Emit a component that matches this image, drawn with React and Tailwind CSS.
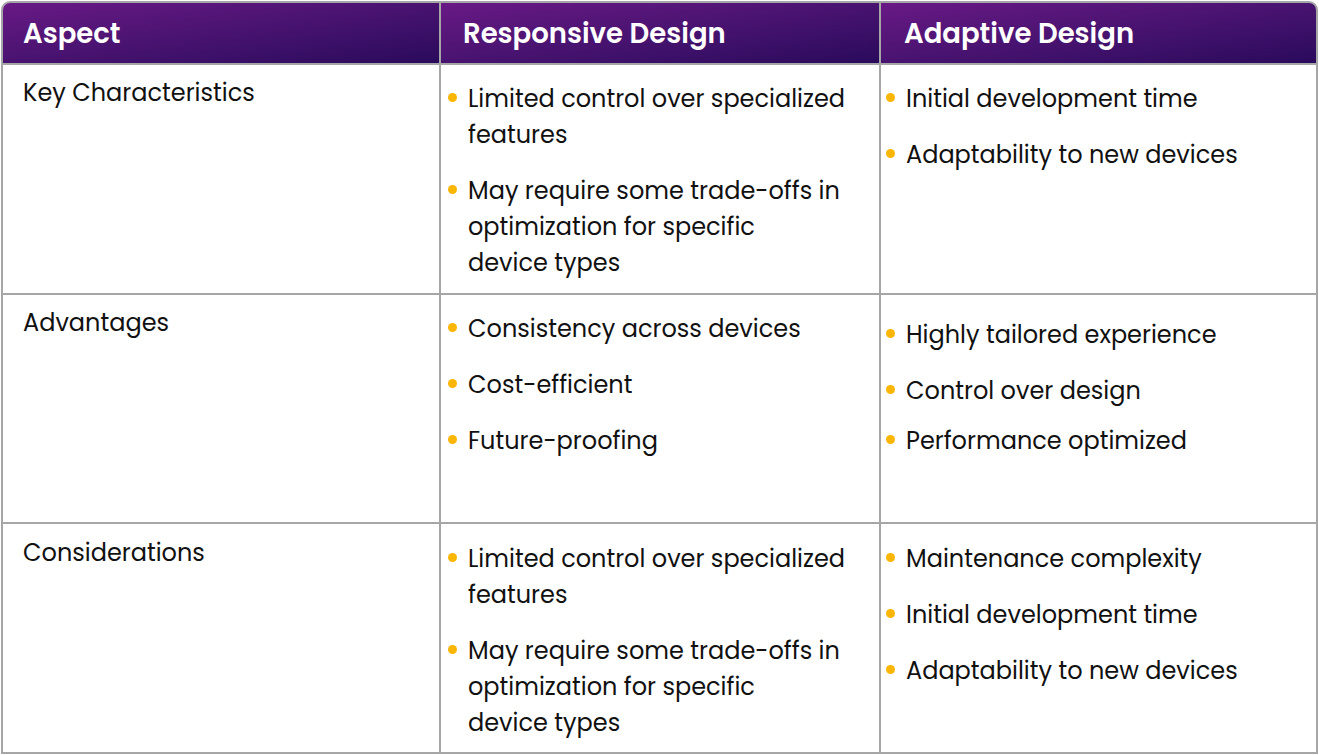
const rows = [
  {
    aspect: 'Key Characteristics',
    aspectPad: 'pt-[10px]',
    responsive: [
      ['Limited control over specialized', 'features'],
      ['May require some trade-offs in', 'optimization for specific', 'device types'],
    ],
    responsivePad: 'pt-[16px]',
    responsiveGaps: ['mt-[20px]'],
    adaptive: [['Initial development time'], ['Adaptability to new devices']],
    adaptivePad: 'pt-[16px]',
    adaptiveGaps: ['mt-[20px]'],
  },
  {
    aspect: 'Advantages',
    aspectPad: 'pt-[10px]',
    responsive: [['Consistency across devices'], ['Cost-efficient'], ['Future-proofing']],
    responsivePad: 'pt-[16px]',
    responsiveGaps: ['mt-[20px]', 'mt-[20px]'],
    adaptive: [['Highly tailored experience'], ['Control over design'], ['Performance optimized']],
    adaptivePad: 'pt-[22px]',
    adaptiveGaps: ['mt-[20px]', 'mt-[14px]'],
  },
  {
    aspect: 'Considerations',
    aspectPad: 'pt-[11px]',
    responsive: [
      ['Limited control over specialized', 'features'],
      ['May require some trade-offs in', 'optimization for specific', 'device types'],
    ],
    responsivePad: 'pt-[17px]',
    responsiveGaps: ['mt-[20px]'],
    adaptive: [['Maintenance complexity'], ['Initial development time'], ['Adaptability to new devices']],
    adaptivePad: 'pt-[17px]',
    adaptiveGaps: ['mt-[20px]', 'mt-[20px]'],
  },
];

function BulletList({ items, gaps, pad, left }) {
  return (
    <ul className={`${pad} ${left}`}>
      {items.map((lines, i) => (
        <li key={i} className={`flex gap-[11px] ${i > 0 ? gaps[i - 1] : ''}`}>
          <span className="mt-[12px] w-[9px] h-[9px] rounded-full bg-[#fbb604] shrink-0" />
          <span className="flex flex-col">
            {lines.map((l) => (
              <span key={l} className="whitespace-nowrap">{l}</span>
            ))}
          </span>
        </li>
      ))}
    </ul>
  );
}

export default function App() {
  const head = 'bg-gradient-to-br from-[#691985] to-[#2a0a5c] h-[60px] flex items-center pt-[2px] text-white font-semibold text-[27.5px]';
  return (
    <div className="min-h-screen bg-white pl-[1px] pt-[1px]" style={{ fontFamily: 'Poppins, "Open Sans", sans-serif' }}>
      <div className="w-[1317px] bg-[#a6a6a6] p-[2px] rounded-t-[9px] grid grid-cols-[436px_438px_435px] grid-rows-[60px_228px_227px_228px] gap-[2px] text-[24px] leading-[36px] text-[#111111]">
        <div className={`${head} rounded-tl-[7px] pl-[20px]`}>Aspect</div>
        <div className={`${head} pl-[22px]`}>Responsive Design</div>
        <div className={`${head} rounded-tr-[7px] pl-[23px]`}>Adaptive Design</div>

        {rows.map((r) => (
          <div key={r.aspect} className="contents">
            <div className={`bg-white pl-[20px] ${r.aspectPad}`}>{r.aspect}</div>
            <div className="bg-white">
              <BulletList items={r.responsive} gaps={r.responsiveGaps} pad={r.responsivePad} left="pl-[7px]" />
            </div>
            <div className="bg-white">
              <BulletList items={r.adaptive} gaps={r.adaptiveGaps} pad={r.adaptivePad} left="pl-[5px]" />
            </div>
          </div>
        ))}
      </div>
    </div>
  );
}
